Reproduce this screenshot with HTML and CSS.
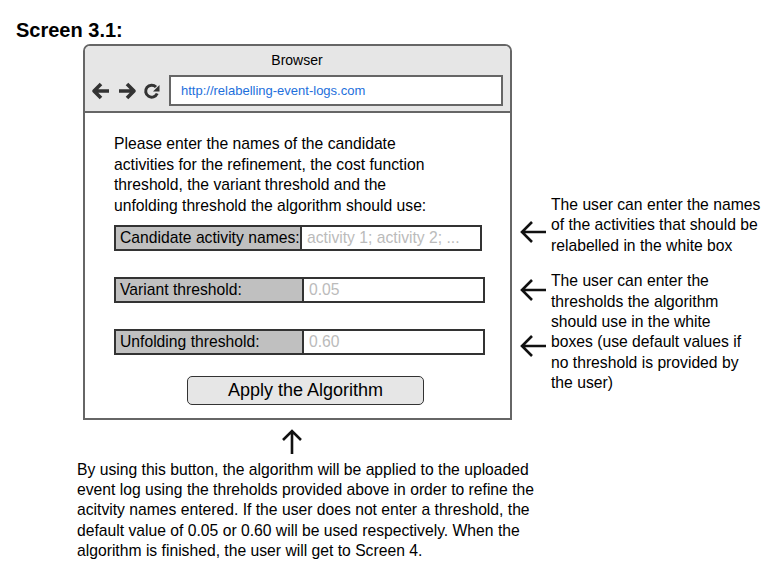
FILE: index.html
```html
<!DOCTYPE html>
<html lang="en">
<head>
    <meta charset="UTF-8">
    <title>Screen 3.1</title>
    <link rel="stylesheet" href="styles.css">
</head>
<body>
    <h1 class="title">Screen 3.1:</h1>

    <div class="layout">
        <!-- Browser mockup + caption -->
        <div class="main">
            <div class="browser">
                <div class="browser-head">
                    <div class="browser-name">Browser</div>
                    <div class="nav-row">
                        <svg class="nav-icon" width="20" height="20" viewBox="0 0 20 20">
                            <path d="M18 10H4M10 3L3 10l7 7" fill="none" stroke="#333" stroke-width="3.6" stroke-linejoin="round"/>
                        </svg>
                        <svg class="nav-icon" width="20" height="20" viewBox="0 0 20 20">
                            <path d="M2 10h14M10 3l7 7-7 7" fill="none" stroke="#333" stroke-width="3.6" stroke-linejoin="round"/>
                        </svg>
                        <svg class="nav-icon" width="18" height="18" viewBox="0 0 18 18">
                            <path d="M14.2 11.5A6 6 0 1 1 13 5" fill="none" stroke="#333" stroke-width="3"/>
                            <path d="M10 9.5l6.5 0 0-6.5z" fill="#333"/>
                        </svg>
                        <div class="url-box">http://relabelling-event-logs.com</div>
                    </div>
                </div>

                <div class="browser-body">
                    <p class="intro">Please enter the names of the candidate activities for the refinement, the cost function threshold, the variant threshold and the unfolding threshold the algorithm should use:</p>

                    <div class="field field-names">
                        <div class="field-label">Candidate activity names:</div>
                        <div class="field-input">activity 1; activity 2; ...</div>
                    </div>
                    <div class="field">
                        <div class="field-label">Variant threshold:</div>
                        <div class="field-input">0.05</div>
                    </div>
                    <div class="field">
                        <div class="field-label">Unfolding threshold:</div>
                        <div class="field-input">0.60</div>
                    </div>

                    <div class="btn-wrap">
                        <div class="apply-btn">Apply the Algorithm</div>
                    </div>
                </div>
            </div>

            <div class="up-arrow">
                <svg width="22" height="26" viewBox="0 0 22 26">
                    <path d="M11 26V3M2 12l9-9 9 9" fill="none" stroke="#111" stroke-width="2.6"/>
                </svg>
            </div>

            <p class="caption">By using this button, the algorithm will be applied to the uploaded event log using the threholds provided above in order to refine the acitvity names entered. If the user does not enter a threshold, the default value of 0.05 or 0.60 will be used respectively. When the algorithm is finished, the user will get to Screen 4.</p>
        </div>

        <!-- Pointer arrows -->
        <div class="arrows">
            <svg class="arrow arrow-1" width="26" height="24" viewBox="0 0 26 24">
                <path d="M26 12H3M12 2L2 12l10 10" fill="none" stroke="#111" stroke-width="2.6"/>
            </svg>
            <svg class="arrow arrow-2" width="26" height="24" viewBox="0 0 26 24">
                <path d="M26 12H3M12 2L2 12l10 10" fill="none" stroke="#111" stroke-width="2.6"/>
            </svg>
            <svg class="arrow arrow-3" width="26" height="24" viewBox="0 0 26 24">
                <path d="M26 12H3M12 2L2 12l10 10" fill="none" stroke="#111" stroke-width="2.6"/>
            </svg>
        </div>

        <!-- Notes -->
        <div class="notes">
            <p class="note note-1">The user can enter the names of the activities that should be relabelled in the white box</p>
            <p class="note note-2">The user can enter the thresholds the algorithm should use in the white boxes (use default values if no threshold is provided by the user)</p>
        </div>
    </div>
</body>
</html>
```

FILE: styles.css
```css
body {
    margin: 0;
    font-family: "Liberation Sans", Arial, sans-serif;
    color: #000;
    background: #fff;
}

.title {
    margin: 0;
    padding: 19px 0 0 16px;
    font-size: 20px;
    line-height: 23px;
    font-weight: bold;
}

.layout {
    display: flex;
    padding-top: 2px;
}

.main {
    width: 439px;
    flex: none;
    padding-left: 77px;
}

.browser {
    margin-left: 6px;
    width: 429px;
    box-sizing: border-box;
    border: 2px solid #666;
    border-radius: 7px 7px 0 0;
}

.browser-head {
    background: #e6e6e6;
    border-bottom: 2px solid #666;
    border-radius: 5px 5px 0 0;
    padding: 6px 7px 5px 6px;
}

.browser-name {
    text-align: center;
    font-size: 14px;
    line-height: 17px;
    margin-bottom: 6px;
}

.nav-row {
    display: flex;
    align-items: center;
    gap: 6px;
}

.nav-icon {
    flex: none;
}

.url-box {
    flex: 1;
    margin-left: 2px;
    height: 31px;
    box-sizing: border-box;
    border: 2px solid #666;
    background: #fff;
    color: #1d6fdc;
    font-size: 13px;
    line-height: 27px;
    padding-left: 10px;
}

.browser-body {
    padding: 21px 0 13px 29px;
}

.intro {
    margin: 0 0 9px 0;
    width: 318px;
    font-size: 15.7px;
    line-height: 20.5px;
}

.field {
    display: flex;
    width: 371px;
    height: 26px;
    box-sizing: border-box;
    border: 2px solid #333;
    margin-bottom: 26px;
    font-size: 15.7px;
    line-height: 22px;
}

.field-names {
    width: 368px;
}

.field-label {
    width: 188px;
    flex: none;
    box-sizing: border-box;
    background: #c0c0c0;
    border-right: 2px solid #333;
    padding-left: 4px;
    white-space: nowrap;
}

.field-names .field-label {
    width: 186px;
}

.field-input {
    flex: 1;
    background: #fff;
    color: #bbb;
    padding-left: 5px;
    white-space: nowrap;
    overflow: hidden;
}

.btn-wrap {
    margin-top: -5px;
    padding-left: 73px;
}

.apply-btn {
    width: 237px;
    height: 29px;
    box-sizing: border-box;
    border: 1px solid #333;
    border-radius: 5px;
    background: #e6e6e6;
    text-align: center;
    font-size: 18px;
    line-height: 27px;
}

.up-arrow {
    padding: 8px 0 0 204px;
    height: 26px;
}

.caption {
    margin: 0;
    width: 470px;
    padding-top: 6px;
    font-size: 15.7px;
    line-height: 20.2px;
}

.arrows {
    display: flex;
    flex-direction: column;
    flex: none;
    padding-left: 4px;
    width: 31px;
}

.arrow {
    display: block;
}

.arrow-1 {
    margin-top: 176px;
}

.arrow-2 {
    margin-top: 34px;
}

.arrow-3 {
    margin-top: 32px;
}

.notes {
    width: 214px;
}

.note {
    margin: 0;
    font-size: 15.7px;
    line-height: 20.4px;
}

.note-1 {
    margin-top: 151px;
}

.note-2 {
    margin-top: 15px;
    width: 198px;
}
```
